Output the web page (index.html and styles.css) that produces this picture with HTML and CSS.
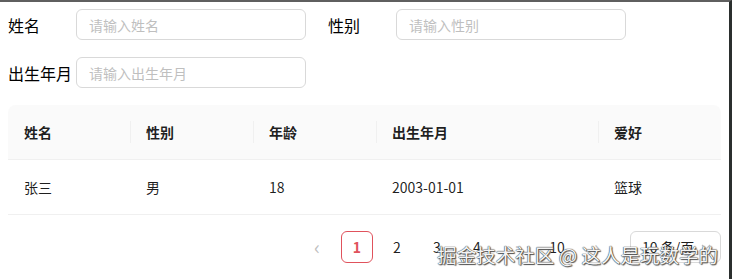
FILE: index.html
```html
<!DOCTYPE html>
<html lang="zh-CN">

<head>
  <meta charset="UTF-8" />
  <title>学生列表</title>

  <link rel="stylesheet" href="styles.css">
</head>

<body>
  <div class="okno">
    <form class="hledani">
      <div class="polozka">
        <label>姓名</label>
        <input type="text" placeholder="请输入姓名">
      </div>
      <div class="polozka">
        <label>性别</label>
        <input type="text" placeholder="请输入性别">
      </div>
      <div class="polozka">
        <label>出生年月</label>
        <input type="text" placeholder="请输入出生年月">
      </div>
    </form>

    <table class="tabulka">
      <colgroup>
        <col style="width: 122px">
        <col style="width: 123px">
        <col style="width: 123px">
        <col style="width: 222px">
        <col>
      </colgroup>
      <thead>
        <tr>
          <th>姓名</th>
          <th>性别</th>
          <th>年龄</th>
          <th>出生年月</th>
          <th>爱好</th>
        </tr>
      </thead>
      <tbody>
        <tr>
          <td>张三</td>
          <td>男</td>
          <td>18</td>
          <td>2003-01-01</td>
          <td>篮球</td>
        </tr>
      </tbody>
    </table>

    <div class="strankovani">
      <span class="sipka">&lsaquo;</span>
      <span class="strana aktivni">1</span>
      <span class="strana">2</span>
      <span class="strana">3</span>
      <span class="strana">4</span>
      <span class="strana tecky">&bull;&bull;&bull;</span>
      <span class="strana">10</span>
      <span class="sipka">&rsaquo;</span>
      <div class="vyber">
        <span>10 条/页</span>
        <svg width="12" height="12" viewBox="0 0 12 12"><path d="M2 4l4 4 4-4" fill="none" stroke="#bfbfbf" stroke-width="1.2"/></svg>
      </div>
    </div>

    <div class="vodoznak">掘金技术社区 @ 这人是玩数学的</div>
  </div>
</body>

</html>
```

FILE: styles.css
```css
body {
  margin: 0;
  font-family: "Noto Sans CJK SC", "Noto Sans", sans-serif;
  color: rgba(0, 0, 0, 0.88);
  background: #fff;
}

.okno {
  position: relative;
  height: 277px;
  width: 729px;
  border-top: 2px solid #5f5f5f;
  border-right: 3px solid #2b2f2e;
  overflow: hidden;
}

.hledani {
  display: flex;
  flex-wrap: wrap;
  row-gap: 17px;
  padding: 7px 0 0 8px;
}

.polozka {
  display: flex;
  align-items: center;
  width: 320px;
}

.polozka label {
  width: 68px;
  font-size: 16px;
  color: #000;
}

.polozka input {
  box-sizing: border-box;
  width: 230px;
  height: 31px;
  padding: 4px 12px;
  border: 1px solid #d9d9d9;
  border-radius: 6px;
  font-family: inherit;
  font-size: 14px;
  outline: none;
}

.polozka input::placeholder {
  color: #bfbfbf;
}

.tabulka {
  width: 713px;
  margin: 17px 0 0 8px;
  border-collapse: separate;
  border-spacing: 0;
  table-layout: fixed;
  font-size: 14px;
}

.tabulka th,
.tabulka td {
  text-align: left;
  padding: 0 16px;
  height: 54px;
  border-bottom: 1px solid #f0f0f0;
}

.tabulka th {
  position: relative;
  background-color: #fafafa;
  font-weight: 600;
}

.tabulka th:first-child {
  border-top-left-radius: 8px;
}

.tabulka th:last-child {
  border-top-right-radius: 8px;
}

.tabulka th + th::before {
  content: "";
  position: absolute;
  left: 0;
  top: 16px;
  height: 22px;
  width: 1px;
  background: #f0f0f0;
}

.strankovani {
  display: flex;
  align-items: center;
  justify-content: flex-end;
  gap: 8px;
  margin: 16px 8px 0 0;
  font-size: 14px;
}

.sipka,
.strana {
  width: 32px;
  height: 32px;
  line-height: 32px;
  text-align: center;
  box-sizing: border-box;
  border-radius: 6px;
}

.sipka {
  color: #bfbfbf;
  font-size: 20px;
}

.strana.aktivni {
  border: 1px solid #e0525c;
  color: #e0525c;
  font-weight: 600;
  line-height: 30px;
}

.strana.tecky {
  color: #c8c8c8;
  font-size: 10px;
  letter-spacing: 1px;
}

.vyber {
  box-sizing: border-box;
  display: flex;
  align-items: center;
  justify-content: space-between;
  width: 91px;
  height: 32px;
  margin-left: 9px;
  padding: 0 8px 0 11px;
  border: 1px solid #d9d9d9;
  border-radius: 6px;
}

.vodoznak {
  position: absolute;
  right: 11px;
  bottom: 10px;
  font-size: 19.5px;
  color: #f4f4f4;
  text-shadow: 0 0 1px #333, 0 0 1px #333, 1px 1px 1px #555;
}
```
